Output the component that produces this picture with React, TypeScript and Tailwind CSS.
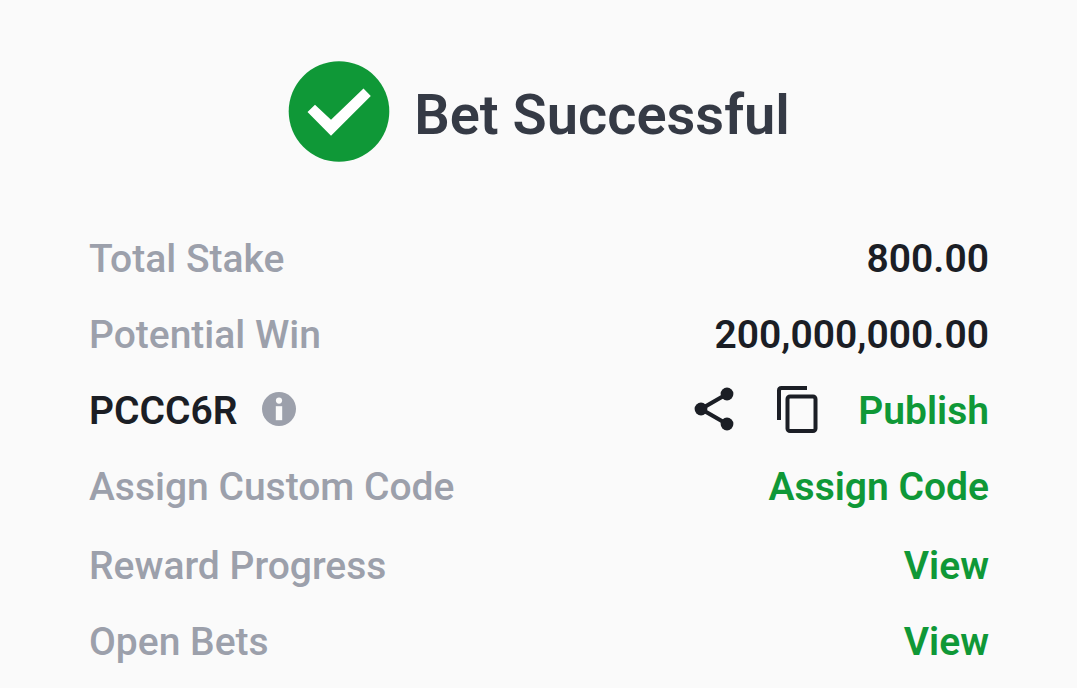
import type { ReactNode } from "react";

interface RowProps {
  label: ReactNode;
  children: ReactNode;
}

/** One line of the bet summary */
function Row({ label, children }: RowProps) {
  return (
    <div className="flex items-center justify-between">
      <dt className="flex items-center text-[#9ca0ab]">{label}</dt>
      <dd className="flex items-center font-semibold text-[#1b1e25]">{children}</dd>
    </div>
  );
}

function CheckBadge() {
  return (
    <svg viewBox="0 0 102 102" className="size-[102px]" aria-hidden="true">
      <circle cx="51" cy="50.5" r="50.3" fill="#0f9837" />
      <path d="M19.5 51 L27 43.7 L43 58.7 L75.5 27.5 L82.8 35 L43 74.7 Z" fill="#fff" />
    </svg>
  );
}

function InfoIcon() {
  return (
    <svg viewBox="0 0 34 34" className="size-[34px]" aria-hidden="true">
      <circle cx="17" cy="17" r="17" fill="#9ca0ab" />
      <circle cx="17" cy="8.6" r="3.1" fill="#fafafa" />
      <rect x="13.8" y="14.2" width="6.4" height="14" fill="#fafafa" />
    </svg>
  );
}

function ShareIcon() {
  return (
    <svg viewBox="0 0 40 44" className="h-11 w-10" aria-hidden="true">
      <path d="M33 7 L7 22 L33 37" fill="none" stroke="#1b1e25" strokeWidth="4.2" />
      <circle cx="33" cy="7" r="6.4" fill="#1b1e25" />
      <circle cx="7" cy="22" r="6.4" fill="#1b1e25" />
      <circle cx="33" cy="37" r="6.4" fill="#1b1e25" />
    </svg>
  );
}

function CopyIcon() {
  return (
    <svg viewBox="0 0 42 48" className="h-12 w-[42px]" fill="none" stroke="#1b1e25" strokeWidth="4" aria-hidden="true">
      <path d="M3 35 V5.5 Q3 3 5.5 3 H31" />
      <rect x="11.5" y="11.5" width="28" height="34.5" rx="2.5" />
    </svg>
  );
}

export default function App() {
  return (
    <main className="min-h-screen bg-[#fafafa] pt-[61px] pr-[88px] pl-[89px] font-[Roboto,sans-serif]">
      <header className="flex items-end justify-center gap-6">
        <CheckBadge />
        <h1 className="text-[56px] leading-[96px] font-semibold text-[#353a45]">Bet Successful</h1>
      </header>

      <dl className="mt-[72px] flex flex-col gap-7 text-[39px] leading-[48px] font-medium">
        <Row label="Total Stake">800.00</Row>
        <Row label="Potential Win">200,000,000.00</Row>
        <Row
          label={
            <>
              <span className="font-semibold text-[#1b1e25]">PCCC6R</span>
              <button type="button" aria-label="Code info" className="mb-1 ml-6">
                <InfoIcon />
              </button>
            </>
          }
        >
          <div className="-my-1 mr-10 flex items-center gap-[42px] pb-1">
            <button type="button" aria-label="Share">
              <ShareIcon />
            </button>
            <button type="button" aria-label="Copy">
              <CopyIcon />
            </button>
          </div>
          <button type="button" className="text-[#0f9837]">Publish</button>
        </Row>
        <Row label="Assign Custom Code">
          <button type="button" className="text-[#0f9837]">Assign Code</button>
        </Row>
      </dl>

      <dl className="mt-[31px] flex flex-col gap-7 text-[39px] leading-[48px] font-medium">
        <Row label="Reward Progress">
          <button type="button" className="text-[#0f9837]">View</button>
        </Row>
        <Row label="Open Bets">
          <button type="button" className="text-[#0f9837]">View</button>
        </Row>
      </dl>
    </main>
  );
}
